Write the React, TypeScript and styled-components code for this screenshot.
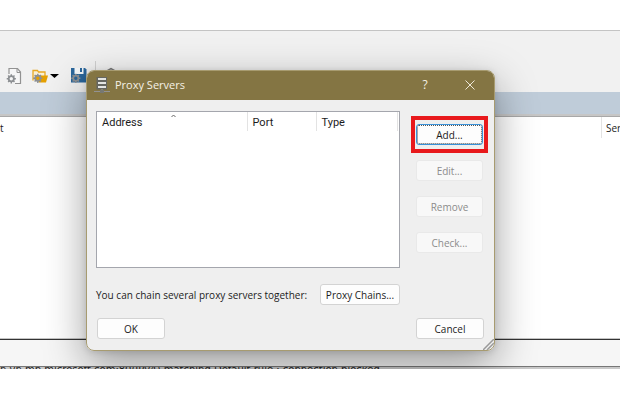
import React from "react";
import styled, { createGlobalStyle, css } from "styled-components";

const GlobalStyle = createGlobalStyle`
  * { box-sizing: border-box; }
  body {
    margin: 0;
    background: #fff;
    color: #1c1c1c;
    font-family: "Open Sans", "Noto Sans", sans-serif;
    font-size: 10px;
    line-height: 14px;
  }
  button { font: inherit; color: inherit; }
`;

const AppWindow = styled.main`
  position: relative;
  margin-top: 30px;
  overflow: hidden;
  border-top: 1px solid #c4c4c4;
  background: #f1f1f1;
`;

const Toolbar = styled.div`
  display: flex;
  align-items: center;
  height: 61px;
  padding: 30px 0 2px 5px;
`;

const ToolButton = styled.button<{ $gap?: number }>`
  display: flex;
  padding: 0;
  margin-right: ${(p) => p.$gap ?? 0}px;
  border: 0;
  background: none;
`;

const Divider = styled.span`
  width: 1px;
  height: 30px;
  margin: 0 6px 0 7px;
  background: #cfcfcf;
`;

const Band = styled.div`
  height: 24px;
  background: #bfccd9;
  border-bottom: 2px solid #c6c6c6;
`;

const Content = styled.div`
  display: flex;
  justify-content: space-between;
  height: 223px;
  border-top: 1px solid #a8a8a8;
  background: #fff;
  border-bottom: 1px solid #c4c4c4;
`;

const ContentHeading = styled.span<{ $divided?: boolean }>`
  height: 21px;
  padding-top: 4px;
  white-space: nowrap;
  overflow: hidden;
  ${(p) =>
    p.$divided &&
    css`
      width: 19px;
      padding-left: 4px;
      border-left: 1px solid #e3e3e3;
    `}
`;

const StatusBar = styled.div`
  height: 28px;
  border-top: 1px solid #333;
  border-bottom: 1px solid #777;
  background: #f6f6f6;
`;

const LogLine = styled.div`
  height: 2px;
  overflow: hidden;
  background: #c9c9c9;
  white-space: nowrap;
  font-family: "DejaVu Sans", sans-serif;
  line-height: 6px;
`;

const Dialog = styled.section`
  position: absolute;
  top: 39px;
  left: 86px;
  width: 409px;
  overflow: hidden;
  border: 1px solid #a79b70;
  border-radius: 8px;
  background: #efefef;
`;

const DialogShadow = styled.div`
  position: absolute;
  top: 39px;
  left: 86px;
  width: 409px;
  height: 281px;
  border-radius: 8px;
  box-shadow: 0 14px 42px rgba(0, 0, 0, 0.38), 0 1px 6px rgba(0, 0, 0, 0.12);
`;

const TitleBar = styled.header`
  display: flex;
  align-items: center;
  height: 30px;
  margin: -1px -1px 0;
  padding: 0 16px 0 8px;
  background: #847543;
  color: #f5f1e6;
`;

const Title = styled.h1`
  flex: 1;
  margin: 0 0 0 5px;
  font-size: 11px;
  font-weight: 400;
`;

const CaptionButton = styled.button`
  display: flex;
  align-items: center;
  justify-content: center;
  width: 18px;
  height: 20px;
  margin-left: 27px;
  padding: 0;
  border: 0;
  background: none;
  font-size: 12px;
`;

const DialogBody = styled.div`
  padding: 11px 9px 11px;
`;

const MainRow = styled.div`
  display: flex;
  justify-content: space-between;
`;

const ListBox = styled.div`
  width: 304px;
  height: 157px;
  border: 1px solid #a4a6ad;
  background: #fff;
`;

const ServerTable = styled.table`
  width: 300px;
  border-collapse: collapse;
  table-layout: fixed;
  font-family: Roboto, sans-serif;
  font-size: 11px;
`;

const HeadCell = styled.th<{ $width: number }>`
  position: relative;
  width: ${(p) => p.$width}px;
  height: 19px;
  padding: 2px 0 0 5px;
  border-right: 1px solid #e3e3e3;
  font-weight: 400;
  text-align: left;
`;

const SortMark = styled.svg`
  position: absolute;
  top: 2px;
  left: 74px;
`;

const Actions = styled.div`
  display: flex;
  flex-direction: column;
  align-items: center;
  gap: 15px;
  width: 77px;
  padding-top: 5px;
  margin-right: -3px;
`;

const Highlight = styled.div`
  align-self: stretch;
  padding: 4px 1px;
  margin-bottom: -8px;
  border: 4px solid #e8191c;
`;

const PushButton = styled.button<{ $width: number; $focused?: boolean }>`
  display: block;
  width: ${(p) => p.$width}px;
  height: 21px;
  padding: 0;
  border: 1px solid ${(p) => (p.$focused ? "#3a92d8" : "#d3d3d3")};
  border-radius: 3px;
  background: #fdfdfd;
  line-height: 18px;
  ${(p) =>
    p.$focused &&
    css`
      outline: 1px dotted #555;
      outline-offset: -2px;
    `}
  &:disabled {
    border-color: #e9e9e9;
    background: #f8f8f8;
    color: #8c8c8c;
  }
`;

const ChainRow = styled.div`
  display: flex;
  align-items: center;
  justify-content: space-between;
  width: 304px;
  margin: 16px 0 13px;
`;

const Footer = styled.footer`
  display: flex;
  justify-content: space-between;
  padding: 0 1px;
`;

const Grip = styled.svg`
  position: absolute;
  right: 0;
  bottom: 0;
`;

const Gear = ({ x, y, fill }: { x: number; y: number; fill: string }) => (
  <g transform={`translate(${x} ${y})`}>
    <path
      d="M0-4.6V4.6M-4.6 0H4.6M-3.2-3.2L3.2 3.2M-3.2 3.2L3.2-3.2"
      stroke="#8d9093"
      strokeWidth="1.4"
    />
    <circle r="2.6" fill={fill} stroke="#8d9093" strokeWidth="1.8" />
  </g>
);

const NewIcon = () => (
  <svg width="18" height="18" viewBox="0 0 18 18">
    <path d="M4 7V1.5h8.5L15.5 5v11.5H10" fill="#f7f7f7" stroke="#929292" strokeWidth="1.2" />
    <path d="M12 2v3.5h3.5" fill="none" stroke="#929292" />
    <Gear x={6.3} y={11.8} fill="#f5f5f5" />
  </svg>
);

const OpenIcon = () => (
  <svg width="18" height="18" viewBox="0 0 18 18">
    <path d="M2 13.5V3.5h4.5l1 1.5H14v4" fill="#faf0d4" stroke="#e7a822" strokeWidth="1.3" />
    <path d="M4 8.5h13l-2 7H8z" fill="#e5a000" />
    <Gear x={6.8} y={11.3} fill="#e5a000" />
  </svg>
);

const SaveIcon = () => (
  <svg width="18" height="18" viewBox="0 0 18 18">
    <path d="M1 1h14l1.5 1.5V15.5H1z" fill="#2b679c" />
    <path d="M4.5 1h9v6h-9z" fill="#f5f8fa" />
    <path d="M10 1h2v4h-2z" fill="#2b679c" />
    <Gear x={5.8} y={11.3} fill="#2b679c" />
  </svg>
);

const ServerIcon = () => (
  <svg width="16" height="16" viewBox="0 0 16 16">
    <path d="M2.5 0h10.5v12.5H2.5z" fill="#656660" />
    <path d="M4 2h8M4 6h8M4 10h8" stroke="#e3e4e1" strokeWidth="2" />
    <path d="M8 12v2M0 14.5h16" stroke="#929292" strokeWidth="1.2" />
    <path d="M6 13h4v3H6z" fill="#777872" />
  </svg>
);

const actions = ["Edit...", "Remove", "Check..."];

export default function App() {
  return (
    <>
      <GlobalStyle />
      <AppWindow>
        <Toolbar>
          <ToolButton aria-label="New profile" $gap={8}><NewIcon /></ToolButton>
          <ToolButton aria-label="Open profile" $gap={1}><OpenIcon /></ToolButton>
          <ToolButton aria-label="Recent profiles" $gap={11}>
            <svg width="9" height="6"><path d="M0 1h9L4.5 5z" fill="#000" /></svg>
          </ToolButton>
          <ToolButton aria-label="Save profile"><SaveIcon /></ToolButton>
          <Divider />
          <ToolButton aria-label="Proxy settings">
            <svg width="18" height="18" viewBox="0 0 18 18">
              <path d="M4 4.5L9 1.5l5 3" fill="none" stroke="#777" strokeWidth="1.5" />
            </svg>
          </ToolButton>
        </Toolbar>
        <Band />
        <Content>
          <ContentHeading>t</ContentHeading>
          <ContentHeading $divided>Server</ContentHeading>
        </Content>
        <StatusBar />
        <LogLine>n.vn.mp.microsoft.com:80(IPv4) matching Default rule : connection blocked</LogLine>

        <DialogShadow />
        <Dialog role="dialog" aria-labelledby="dialog-title">
          <TitleBar>
            <ServerIcon />
            <Title id="dialog-title">Proxy Servers</Title>
            <CaptionButton aria-label="Help">?</CaptionButton>
            <CaptionButton aria-label="Close">
              <svg width="10" height="10" viewBox="0 0 10 10">
                <path d="M.5.5l9 9M9.5.5l-9 9" stroke="#eee8d8" />
              </svg>
            </CaptionButton>
          </TitleBar>
          <DialogBody>
            <MainRow>
              <ListBox>
                <ServerTable>
                  <thead>
                    <tr>
                      <HeadCell $width={150}>
                        Address
                        <SortMark width="5" height="4"><path d="M.5 3L2.5 1l2 2" fill="none" stroke="#666" /></SortMark>
                      </HeadCell>
                      <HeadCell $width={69}>Port</HeadCell>
                      <HeadCell $width={81}>Type</HeadCell>
                    </tr>
                  </thead>
                </ServerTable>
              </ListBox>
              <Actions>
                <Highlight><PushButton $width={67} $focused>Add...</PushButton></Highlight>
                {actions.map((label) => (
                  <PushButton key={label} $width={67} disabled>{label}</PushButton>
                ))}
              </Actions>
            </MainRow>
            <ChainRow>
              <span>You can chain several proxy servers together:</span>
              <PushButton $width={80}>Proxy Chains...</PushButton>
            </ChainRow>
            <Footer>
              <PushButton $width={68}>OK</PushButton>
              <PushButton $width={68}>Cancel</PushButton>
            </Footer>
          </DialogBody>
          <Grip width="11" height="11" viewBox="0 0 11 11">
            <path d="M0 11L11 0M4 11l7-7M8 11l3-3" stroke="#999" strokeWidth="1.5" />
          </Grip>
        </Dialog>
      </AppWindow>
    </>
  );
}
